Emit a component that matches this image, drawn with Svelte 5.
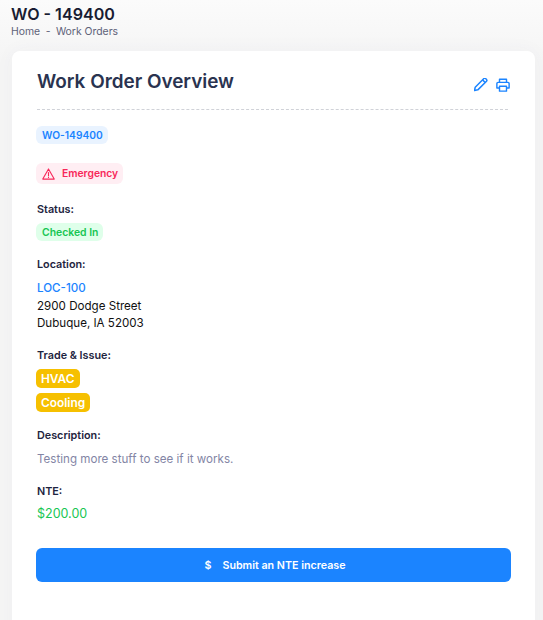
<script>
    let workOrder = {
        id: "149400",
        status: "Checked In",
        location: "LOC-100",
        address: ["2900 Dodge Street", "Dubuque, IA 52003"],
        trades: ["HVAC", "Cooling"],
        description: "Testing more stuff to see if it works.",
        nte: "$200.00",
    };
</script>

<div class="page">
    <header class="page-head">
        <h1>WO - {workOrder.id}</h1>
        <div class="crumbs"><span>Home</span><span>-</span><span>Work Orders</span></div>
    </header>

    <section class="card">
        <div class="card-head">
            <h2>Work Order Overview</h2>
            <div class="actions">
                <svg width="14" height="14" viewBox="1 1 15 15" fill="none" stroke="currentColor" stroke-width="1.6" stroke-linejoin="round">
                    <path d="M1.5 14.5l.8-3.6L11.6 1.6a1.3 1.3 0 0 1 1.8 0l1 1a1.3 1.3 0 0 1 0 1.800L5.100 13.700z" />
                    <path d="M10.200 3l2.800 2.800" />
                </svg>
                <svg width="14" height="14" viewBox="0 0 16 16" fill="none" stroke="currentColor" stroke-width="1.6" stroke-linejoin="round">
                    <path d="M4 5V1.500h8V5" />
                    <path d="M4 11.500H1V6.300C1 5.600 1.500 5 2.300 5h11.400c.8 0 1.300.6 1.300 1.300v5.200h-3" />
                    <path d="M4 9.500h8v5.500H4z" />
                </svg>
            </div>
        </div>

        <span class="tag tag-id">WO-{workOrder.id}</span>

        <span class="tag tag-urgent">
            <svg width="13" height="12" viewBox="0 0 14 13" fill="none" stroke="currentColor" stroke-width="1.2" stroke-linejoin="round" stroke-linecap="round">
                <path d="M7 1L.8 12h12.400z" />
                <path d="M7 5v3.500" />
                <path d="M7 10.200v.1" />
            </svg>
            Emergency
        </span>

        <div class="field status">
            <div class="label">Status:</div>
            <span class="tag tag-status">{workOrder.status}</span>
        </div>

        <div class="field location">
            <div class="label">Location:</div>
            <div class="address">
                <div class="loc-link">{workOrder.location}</div>
                {#each workOrder.address as line}
                    <div>{line}</div>
                {/each}
            </div>
        </div>

        <div class="field trades">
            <div class="label">Trade &amp; Issue:</div>
            <div class="trade-list">
                {#each workOrder.trades as trade}
                    <span class="trade">{trade}</span>
                {/each}
            </div>
        </div>

        <div class="field description">
            <div class="label">Description:</div>
            <p>{workOrder.description}</p>
        </div>

        <div class="field nte">
            <div class="label">NTE:</div>
            <div class="amount">{workOrder.nte}</div>
        </div>

        <button class="submit"><span class="dollar">$</span>Submit an NTE increase</button>
    </section>
</div>

<style>
    :global(body) {
        margin: 0;
        background: #f5f5f5;
        overflow: hidden;
    }

    .page {
        height: 620px;
        overflow: hidden;
        font-family: Inter, "Noto Sans", sans-serif;
        background: linear-gradient(#fbfbfb, #f5f5f5 60px);
    }

    .page-head {
        padding: 5px 11px 0;
        height: 51px;
        box-sizing: border-box;
    }

    h1 {
        margin: 0;
        font-size: 16.100px;
        line-height: 19px;
        font-weight: 600;
        color: #181c32;
    }

    .crumbs {
        display: flex;
        gap: 5.500px;
        margin-top: 1px;
        font-size: 10.400px;
        line-height: 14px;
        font-weight: 400;
        color: #5e6278;
    }

    .card {
        margin: 0 8px 0 12px;
        height: 600px;
        padding: 0 24px;
        box-sizing: border-box;
        background: #fff;
        border-radius: 8px;
        box-shadow: 0 0 20px rgba(76, 87, 125, 0.04);
        display: flex;
        flex-direction: column;
        align-items: flex-start;
    }

    .card-head {
        display: flex;
        justify-content: space-between;
        align-items: flex-start;
        align-self: stretch;
        height: 59px;
        margin: 0 3px 16px 1px;
        box-sizing: border-box;
        padding-top: 19px;
        border-bottom: 1px dashed #d0d2d8;
    }

    h2 {
        margin: 0;
        font-size: 18.900px;
        line-height: 24px;
        font-weight: 600;
        color: #2a3350;
    }

    .actions {
        display: flex;
        gap: 8px;
        margin: 8px -2px 0 0;
        color: #1b84ff;
    }

    .tag {
        display: inline-flex;
        align-items: center;
        font-size: 10.500px;
        line-height: 13px;
        font-weight: 600;
        border-radius: 6px;
    }

    .tag-id {
        padding: 3px 5px 2px 6px;
        font-size: 10.200px;
        color: #1b84ff;
        background: #e9f3ff;
    }

    .tag-urgent {
        margin-top: 19px;
        padding: 4px 5px 4px 6px;
        gap: 7px;
        font-size: 10.300px;
        color: #f8285a;
        background: #ffeef3;
    }

    .tag-status {
        padding: 3px 5px 2px 6px;
        font-size: 10.400px;
        color: #17c653;
        background: #dfffea;
    }

    .label {
        margin-left: 1px;
        font-size: 10.800px;
        line-height: 14px;
        font-weight: 600;
        color: #1e2440;
    }

    .status {
        margin-top: 19px;
    }

    .status .label {
        margin-bottom: 3px;
    }

    .location {
        margin-top: 17px;
    }

    .address {
        margin: 8px 0 0 1px;
        font-size: 11.600px;
        line-height: 17.500px;
        color: #111;
    }

    .loc-link {
        color: #1b84ff;
        font-weight: 500;
    }

    .trades {
        margin-top: 16.500px;
    }

    .trade-list {
        display: flex;
        flex-direction: column;
        align-items: flex-start;
        gap: 5px;
        margin-top: 6px;
    }

    .trade {
        padding: 1px 5px;
        font-size: 11.900px;
        line-height: 17px;
        font-weight: 600;
        color: #fff;
        background: #f6c000;
        border-radius: 5px;
    }

    .description {
        margin-top: 17px;
    }

    .description p {
        margin: 8px 0 0 1px;
        font-size: 11.600px;
        line-height: 17px;
        color: #8385a5;
    }

    .nte {
        margin-top: 17px;
    }

    .amount {
        margin: 6px 0 0 1px;
        font-size: 12.500px;
        line-height: 17px;
        color: #17c653;
    }

    .submit {
        align-self: stretch;
        margin-top: 26px;
        height: 34px;
        padding: 0 0 0 3px;
        border: none;
        border-radius: 6px;
        background: #1b84ff;
        color: #fff;
        font-family: inherit;
        font-size: 10.700px;
        font-weight: 600;
        display: flex;
        align-items: center;
        justify-content: center;
    }

    .dollar {
        margin-right: 11px;
    }
</style>
